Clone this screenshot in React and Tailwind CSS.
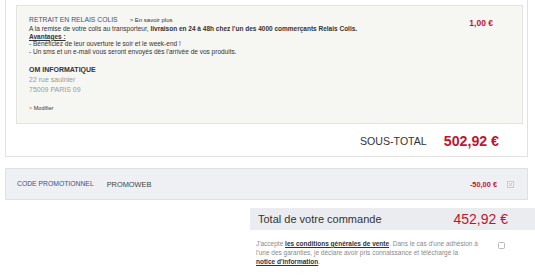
export default function App() {
  return (
    <div className="relative h-[279px] w-[535px] overflow-hidden bg-white text-[#333] [font-family:'Liberation_Sans',Arial,sans-serif]">
      {/* bloc livraison */}
      <div className="ml-[5px] w-[523px] border-x border-b border-[#e2e2e2] pl-[10px] pr-[4px] pt-[5px]">
        <div className="border border-[#e3e3df] bg-[#f6f6f3] pb-[11px] pl-[12px] pr-[29px] pt-[9px]">
          <div className="flex h-[10px] items-start justify-between">
            <div className="flex items-baseline gap-[12px] leading-[10px]">
              <span className="text-[6.8px] text-[#3c4f88]">RETRAIT EN RELAIS COLIS</span>
              <span className="text-[6px] text-[#333]">&gt; En savoir plus</span>
            </div>
            <span className="mt-[3px] text-[8.5px] font-bold leading-[10px] text-[#c0142f]">1,00 €</span>
          </div>
          <div className="text-[6.5px] leading-[7.7px] text-[#333]">
            <p>
              A la remise de votre colis au transporteur,{' '}
              <b>livraison en 24 à 48h chez l'un des 4000 commerçants Relais Colis.</b>
            </p>
            <p className="font-bold underline">Avantages :</p>
            <p>- Bénéficiez de leur ouverture le soir et le week-end !</p>
            <p>- Un sms et un e-mail vous seront envoyés dès l'arrivée de vos produits.</p>
          </div>
          <div className="mt-[9.5px] text-[7px] leading-[10px]">
            <p className="font-bold text-[#333]">OM INFORMATIQUE</p>
            <p className="text-[#9a9a9a]">22 rue saulnier</p>
            <p className="text-[#9a9a9a]">75009 PARIS 09</p>
          </div>
          <p className="mt-[9px] text-[5.5px] leading-[8px] text-[#333]">
            <span className="text-[#d2482e]">&gt;</span> Modifier
          </p>
        </div>
        <div className="flex h-[32px] items-center justify-end gap-[17px] pr-[24px] pt-[3px]">
          <span className="text-[10.6px] text-[#333]">SOUS-TOTAL</span>
          <span className="text-[14.2px] font-bold text-[#c0142f]">502,92 €</span>
        </div>
      </div>

      {/* code promo */}
      <div className="ml-[5px] mt-[11px] flex h-[32px] w-[523px] items-center border border-[#dfe1e5] bg-[#eef0f3] pl-[11px] pr-[13px]">
        <span className="text-[6.8px] text-[#3c4f88]">CODE PROMOTIONNEL</span>
        <span className="ml-[13px] text-[7.4px] text-[#444]">PROMOWEB</span>
        <span className="ml-auto text-[7.4px] font-bold text-[#c0142f]">-50,00 €</span>
        <span className="ml-[10px] flex h-[7px] w-[7px] items-center justify-center border border-[#c9ccd2] bg-[#f3f4f6]">
          <svg viewBox="0 0 6 6" className="h-[5px] w-[5px]">
            <path d="M1 1L5 5M5 1L1 5" stroke="#a3a7ae" strokeWidth="0.8" />
          </svg>
        </span>
      </div>

      {/* total */}
      <div className="ml-[250px] mt-[8px] flex h-[22px] items-center justify-between bg-[#ebecef] pl-[8px] pr-[27px]">
        <span className="text-[11px] text-[#333]">Total de votre commande</span>
        <span className="text-[14px] text-[#c0142f]">452,92 €</span>
      </div>

      <div className="ml-[256px] mt-[8.5px] flex items-start">
        <p className="w-[232px] text-[6.5px] leading-[9px] text-[#8a8a8a]">
          J'accepte <b className="text-[#333] underline">les conditions générales de vente</b>. Dans le cas d'une adhésion à
          <br />
          l'une des garanties, je déclare avoir pris connaissance et téléchargé la
          <br />
          <b className="text-[#333] underline">notice d'information</b>.
        </p>
        <span className="ml-[10px] mt-[3px] h-[7px] w-[7px] rounded-[1.5px] border border-[#b9b9b9] bg-white"></span>
      </div>
    </div>
  );
}
